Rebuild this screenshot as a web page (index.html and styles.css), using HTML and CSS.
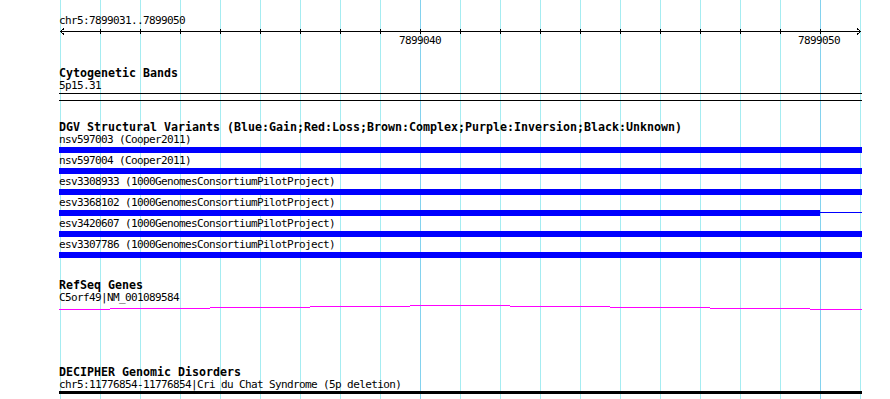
FILE: index.html
```html
<!DOCTYPE html>
<html lang="en">
<head>
  <meta charset="UTF-8">
  <title>chr5:7899031..7899050</title>
  <link rel="stylesheet" href="styles.css">
</head>
<body>
  <div class="browser">
    <div class="ruler">
      <div class="ruler-label">chr5:7899031..7899050</div>
      <svg class="ruler-axis" width="803" height="20" viewBox="0 0 803 20">
        <path class="axis" d="M1 4.5 H802 M5 1.5 L1.5 4.5 L5 7.5 M798 1.5 L801.5 4.5 L798 7.5"/>
        <path class="axis" d="M41.5 2 V7 M81.5 2 V7 M121.5 2 V7 M161.5 2 V7 M201.5 2 V7 M241.5 2 V7 M281.5 2 V7 M321.5 2 V7 M361.5 2 V7 M401.5 2 V7 M441.5 2 V7 M481.5 2 V7 M521.5 2 V7 M561.5 2 V7 M601.5 2 V7 M641.5 2 V7 M681.5 2 V7 M721.5 2 V7 M761.5 2 V7"/>
        <text class="tick-label" x="340" y="17">7899040</text>
        <text class="tick-label" x="739" y="17">7899050</text>
      </svg>
    </div>

    <section class="track">
      <h2 class="track-title">Cytogenetic Bands</h2>
      <div class="feature-label">5p15.31</div>
      <div class="band"></div>
    </section>

    <section class="track">
      <h2 class="track-title">DGV Structural Variants (Blue:Gain;Red:Loss;Brown:Complex;Purple:Inversion;Black:Unknown)</h2>
      <div class="variant">
        <div class="feature-label">nsv597003 (Cooper2011)</div>
        <div class="bar"></div>
      </div>
      <div class="variant">
        <div class="feature-label">nsv597004 (Cooper2011)</div>
        <div class="bar"></div>
      </div>
      <div class="variant">
        <div class="feature-label">esv3308933 (1000GenomesConsortiumPilotProject)</div>
        <div class="bar"></div>
      </div>
      <div class="variant">
        <div class="feature-label">esv3368102 (1000GenomesConsortiumPilotProject)</div>
        <div class="bar bar-partial">
          <div class="bar-block" style="width: 761px"></div>
          <div class="bar-line"></div>
        </div>
      </div>
      <div class="variant">
        <div class="feature-label">esv3420607 (1000GenomesConsortiumPilotProject)</div>
        <div class="bar"></div>
      </div>
      <div class="variant">
        <div class="feature-label">esv3307786 (1000GenomesConsortiumPilotProject)</div>
        <div class="bar"></div>
      </div>
    </section>

    <section class="track track-gene">
      <h2 class="track-title">RefSeq Genes</h2>
      <div class="feature-label">C5orf49|NM_001089584</div>
      <svg class="gene" width="803" height="6" viewBox="0 0 803 6">
        <path d="M0 4.5 H51 M51 3.5 H151 M151 2.5 H251 M251 1.5 H351 M351 0.5 H451 M451 1.5 H551 M551 2.5 H651 M651 3.5 H751 M751 4.5 H803"/>
      </svg>
    </section>

    <section class="track track-decipher">
      <h2 class="track-title">DECIPHER Genomic Disorders</h2>
      <div class="feature-label">chr5:11776854-11776854|Cri du Chat Syndrome (5p deletion)</div>
      <div class="disorder"></div>
    </section>
  </div>
</body>
</html>
```

FILE: styles.css
```css
* { margin: 0; padding: 0; box-sizing: border-box; }

html, body {
  background: #fff;
  overflow: hidden;
}

body {
  font-family: "DejaVu Sans Mono", "Liberation Mono", monospace;
  color: #000;
}

/* grid columns every 40px, from x=60 to x=860; major lines at 420 and 820 */
.browser {
  width: 801px;
  height: 399px;
  margin-left: 60px;
  background-image:
    linear-gradient(to right, transparent 360px, #84d2ee 360px, #84d2ee 361px, transparent 361px),
    linear-gradient(to right, transparent 760px, #84d2ee 760px, #84d2ee 761px, transparent 761px),
    linear-gradient(to right, #a6ecf1 1px, transparent 1px);
  background-size: 100% 100%, 100% 100%, 40px 100%;
  background-repeat: no-repeat, no-repeat, repeat-x;
}

.browser > * {
  width: 803px;
  margin-left: -1px;
}

.ruler {
  padding-top: 15px;
}

.ruler-label,
.feature-label {
  font-size: 11px;
  letter-spacing: -0.62px;
  line-height: 12px;
  white-space: nowrap;
}

.ruler-axis {
  display: block;
  shape-rendering: crispEdges;
}

.axis {
  fill: none;
  stroke: #000;
  stroke-width: 1;
}

.tick-label {
  font-family: "DejaVu Sans Mono", "Liberation Mono", monospace;
  font-size: 11px;
  letter-spacing: -0.62px;
  fill: #000;
}

.track {
  margin-top: 20px;
}

.track-title {
  font-size: 11.63px;
  font-weight: bold;
  line-height: 13px;
  white-space: nowrap;
}

.band {
  height: 8px;
  margin-top: 1px;
  border-top: 1px solid #000;
  border-bottom: 1px solid #000;
}

.variant {
  padding-bottom: 2px;
}

.bar {
  height: 6px;
  margin-top: 1px;
  background: #0000ff;
}

.bar-partial {
  display: flex;
  align-items: flex-start;
  background: none;
}

.bar-block {
  height: 6px;
  background: #0000ff;
}

.bar-line {
  flex: 1;
  height: 1px;
  margin-top: 2px;
  background: #0000ff;
}

.track-gene {
  margin-top: 19px;
}

.gene {
  display: block;
  margin-top: 1px;
  shape-rendering: crispEdges;
}

.gene path {
  fill: none;
  stroke: #ff00ff;
  stroke-width: 1;
}

.track-decipher {
  margin-top: 55px;
}

.disorder {
  height: 3px;
  background: #000;
}
```
